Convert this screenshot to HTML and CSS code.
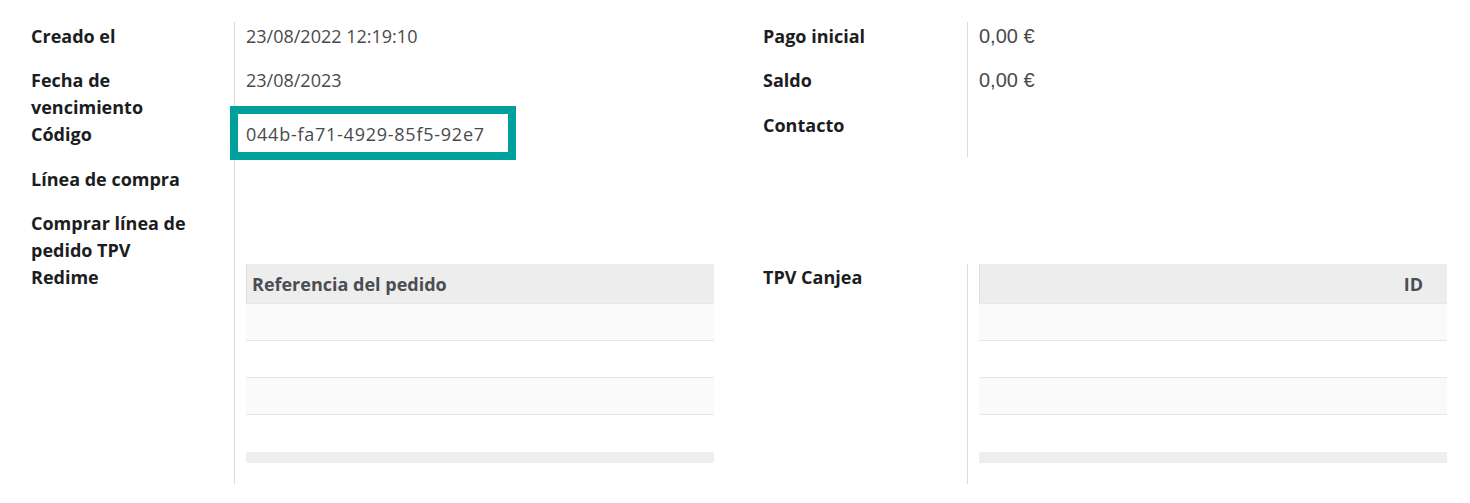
FILE: index.html
```html
<!DOCTYPE html>
<html lang="es">
<head>
<meta charset="utf-8">
<title>Tarjeta regalo</title>
<link rel="stylesheet" href="styles.css">
</head>
<body>
<div class="sheet">
  <div class="half">
    <div class="group">
      <div class="lbl"><span class="clip">Creado el</span></div>
      <div class="val">23/08/2022 12:19:10</div>

      <div class="lbl"><span class="clip">Fecha de vencimiento</span></div>
      <div class="val">23/08/2023</div>

      <div class="lbl tall"><span class="clip">Código</span></div>
      <div class="val tall"><span class="code">044b-fa71-4929-85f5-92e7</span></div>

      <div class="lbl"><span class="clip">Línea de compra</span></div>
      <div class="val"><span class="clip"></span></div>

      <div class="lbl"><span class="clip">Comprar línea de pedido TPV Redime</span></div>
      <div class="val"><span class="clip"></span></div>

      <div class="lbl table-cell"></div>
      <div class="val table-cell">
        <div class="list">
          <div class="list-head">Referencia del pedido</div>
          <div class="list-row odd"></div>
          <div class="list-row"></div>
          <div class="list-row odd"></div>
          <div class="list-row last"></div>
          <div class="list-foot"></div>
        </div>
      </div>
    </div>
  </div>

  <div class="half right">
    <div class="group">
      <div class="lbl"><span class="clip">Pago inicial</span></div>
      <div class="val money">0,00 €</div>

      <div class="lbl"><span class="clip">Saldo</span></div>
      <div class="val money">0,00 €</div>

      <div class="lbl contact"><span class="clip">Contacto</span></div>
      <div class="val contact"><span class="clip"></span></div>
    </div>

    <div class="group">
      <div class="lbl table-cell top0"><span class="clip">TPV Canjea</span></div>
      <div class="val table-cell top0">
        <div class="list">
          <div class="list-head end">ID</div>
          <div class="list-row odd"></div>
          <div class="list-row"></div>
          <div class="list-row odd"></div>
          <div class="list-row last"></div>
          <div class="list-foot"></div>
        </div>
      </div>
    </div>
  </div>
</div>
</body>
</html>
```

FILE: styles.css
```css
html, body {
  margin: 0;
  padding: 0;
  background: #ffffff;
  overflow: hidden;
}

body {
  font-family: "Open Sans", "Noto Sans", sans-serif;
  font-size: 18px;
  line-height: 26px;
  color: #212529;
}

.sheet {
  display: grid;
  grid-template-columns: 719px 720px;
  column-gap: 13px;
  padding: 22px 0 0 19px;
}

.half {
  display: flex;
  flex-direction: column;
}

.half.right {
  justify-content: space-between;
}

.group {
  display: grid;
  grid-template-columns: 215px 1fr;
}

.right .group {
  grid-template-columns: 216px 1fr;
}

.lbl {
  padding: 1px 12px 17px 12px;
  font-weight: 700;
  line-height: 27px;
  color: #1b1d21;
}

.lbl .clip {
  display: block;
  height: 26px;
  max-width: 165px;
}

.val {
  border-left: 1px solid #dcdcdc;
  padding: 1px 24px 17px 11px;
  color: #4a4a4a;
}

.val .clip {
  display: block;
  height: 26px;
}

.lbl.tall,
.val.tall {
  padding-top: 11px;
  padding-bottom: 18px;
}

.lbl.contact,
.val.contact {
  padding-top: 2px;
  padding-bottom: 19px;
}

.table-cell {
  padding-top: 11px;
  padding-bottom: 21px;
}

.table-cell.top0 {
  padding-top: 0;
}

.money {
  font-family: "Liberation Sans", Arial, sans-serif;
  font-size: 20px;
}

.code {
  position: relative;
  display: inline-block;
  letter-spacing: 0.75px;
}

.code::after {
  content: "";
  position: absolute;
  left: -16px;
  top: -15px;
  width: 270px;
  height: 38px;
  border: 8px solid #00a09d;
}

.list {
  display: flex;
  flex-direction: column;
}

.list-head {
  height: 40px;
  box-sizing: border-box;
  padding: 0 6px;
  display: flex;
  align-items: center;
  background: #ededed;
  box-shadow: inset 1px 0 0 #dedede;
  border-bottom: 1px solid #e6e9ec;
  font-weight: 700;
  color: #4a4d52;
}

.list-head.end {
  justify-content: flex-end;
  padding-right: 24px;
}

.list-row {
  height: 37px;
  box-sizing: border-box;
  border-bottom: 1px solid #e6e6e6;
  background: #ffffff;
}

.list-row.odd {
  background: #fafafa;
}

.list-row.last {
  border-bottom: 0;
}

.list-foot {
  height: 11px;
  background: #eeeeee;
}
```
